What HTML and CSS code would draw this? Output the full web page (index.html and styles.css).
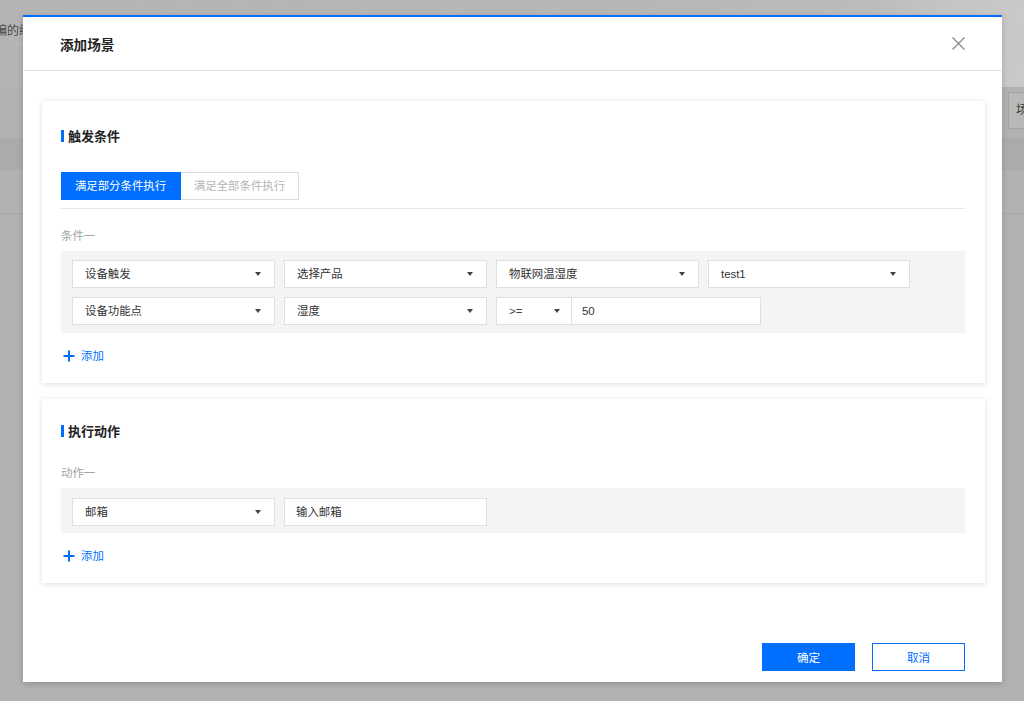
FILE: index.html
```html
<!DOCTYPE html>
<html lang="zh-CN">
<head>
<meta charset="utf-8">
<title>添加场景</title>
<link rel="stylesheet" href="styles.css">
</head>
<body>
<div class="page">
  <div class="page-top"><span class="page-crumb">编的编辑</span></div>
  <div class="page-toolbar"><span class="page-btn">场景</span></div>
  <div class="page-thead"></div>
  <div class="page-row"></div>
</div>

<div class="modal">
  <div class="modal-head">
    <span class="modal-title">添加场景</span>
    <svg class="modal-close" width="13" height="13" viewBox="0 0 13 13"><path d="M0.5 0.5L12.5 12.5M12.5 0.5L0.5 12.5" stroke="#8a8a8a" stroke-width="1.3" fill="none"/></svg>
  </div>

  <div class="modal-body">
    <section class="card card-trigger">
      <h3 class="sec-title"><i class="sec-bar"></i>触发条件</h3>
      <div class="tabs">
        <span class="tab tab-on">满足部分条件执行</span>
        <span class="tab">满足全部条件执行</span>
      </div>
      <div class="item-label">条件一</div>
      <div class="item-box">
        <div class="row">
          <div class="sel w203"><span>设备触发</span><i class="caret"></i></div>
          <div class="sel w203"><span>选择产品</span><i class="caret"></i></div>
          <div class="sel w203"><span>物联网温湿度</span><i class="caret"></i></div>
          <div class="sel w202"><span>test1</span><i class="caret"></i></div>
        </div>
        <div class="row">
          <div class="sel w203"><span>设备功能点</span><i class="caret"></i></div>
          <div class="sel w203"><span>湿度</span><i class="caret"></i></div>
          <div class="combo">
            <div class="sel op"><span>&gt;=</span><i class="caret"></i></div>
            <div class="inp val">50</div>
          </div>
        </div>
      </div>
      <div class="add"><svg width="12" height="12" viewBox="0 0 12 12"><path d="M6 0.5V11.5M0.5 6H11.5" stroke="#006eff" stroke-width="2" fill="none"/></svg><span>添加</span></div>
    </section>

    <section class="card card-action">
      <h3 class="sec-title"><i class="sec-bar"></i>执行动作</h3>
      <div class="item-label label-action">动作一</div>
      <div class="item-box box-action">
        <div class="row">
          <div class="sel w203"><span>邮箱</span><i class="caret"></i></div>
          <div class="inp w203">输入邮箱</div>
        </div>
      </div>
      <div class="add"><svg width="12" height="12" viewBox="0 0 12 12"><path d="M6 0.5V11.5M0.5 6H11.5" stroke="#006eff" stroke-width="2" fill="none"/></svg><span>添加</span></div>
    </section>
  </div>

  <div class="modal-foot">
    <button class="btn btn-primary">确定</button>
    <button class="btn btn-default">取消</button>
  </div>
</div>
</body>
</html>
```

FILE: styles.css
```css
* { box-sizing: border-box; }
html, body { margin: 0; padding: 0; }
body {
  width: 1024px;
  height: 701px;
  overflow: hidden;
  position: relative;
  background: #b2b2b2;
  font-family: "Liberation Sans", "Noto Sans CJK SC", sans-serif;
  font-size: 11.4px;
  color: #333;
}

/* background page (dimmed) */
.page-top {
  height: 87px;
  padding-top: 21px;
  background:
    repeating-linear-gradient(30deg, transparent 0, transparent 46px, rgba(255,255,255,0.07) 47px, transparent 48px),
    repeating-linear-gradient(150deg, transparent 0, transparent 46px, rgba(255,255,255,0.07) 47px, transparent 48px),
    linear-gradient(90deg, #b4b4b4 0%, #b6b6b6 60%, #bbbbbb 84%, #c4c4c4 92%, #c9c9c9 100%);
}
.page-crumb {
  display: block;
  text-indent: -5px;
  color: #4a4a4a;
  font-size: 12px;
  line-height: 20px;
  white-space: nowrap;
}
.page-toolbar {
  height: 51px;
  display: flex;
  justify-content: flex-end;
  padding-top: 5px;
}
.page-btn {
  width: 16px;
  height: 37px;
  border: 1px solid #a3a3a3;
  border-right: none;
  background: #b8b8b8;
  padding-left: 7px;
  line-height: 35px;
  font-size: 12px;
  color: #3a3a3a;
  overflow: hidden;
  white-space: nowrap;
}
.page-thead { height: 32px; background: #ababab; }
.page-row { height: 44px; border-bottom: 1px solid #a7a7a7; }

/* modal */
.modal {
  position: absolute;
  left: 23px;
  top: 15px;
  width: 979px;
  height: 667px;
  background: #fff;
  border-top: 2px solid #006eff;
  box-shadow: 0 2px 6px rgba(0, 0, 0, 0.18);
  display: flex;
  flex-direction: column;
}
.modal-head {
  height: 54px;
  flex: none;
  border-bottom: 1px solid #dfe3ea;
  display: flex;
  align-items: center;
  justify-content: space-between;
  padding: 0 37px 0 37px;
}
.modal-title {
  font-size: 13.6px;
  font-weight: bold;
  color: #222;
  font-family: "Noto Sans CJK SC", sans-serif;
}
.modal-close { display: block; }

.modal-body {
  padding: 30px 17px 0 19px;
  display: flex;
  flex-direction: column;
  gap: 16px;
}

.card {
  background: #fff;
  box-shadow: 0 1px 6px rgba(0, 0, 0, 0.13);
  padding: 24px 20px 17px 19px;
}
.card-action { padding-top: 21px; }

.sec-title {
  margin: 0;
  font-size: 13px;
  line-height: 22px;
  font-weight: bold;
  color: #222;
  display: flex;
  align-items: center;
  font-family: "Noto Sans CJK SC", sans-serif;
}
.sec-bar {
  width: 3px;
  height: 12px;
  background: #006eff;
  margin-right: 4px;
}

.tabs {
  margin-top: 25px;
  padding-bottom: 8px;
  border-bottom: 1px solid #e6e6e6;
  display: flex;
}
.tab {
  height: 28px;
  line-height: 26px;
  width: 118px;
  border: 1px solid #dcdcdc;
  border-left: none;
  text-align: center;
  color: #b5b5b5;
}
.tab-on {
  width: 120px;
  background: #006eff;
  border-color: #006eff;
  color: #fff;
}

.item-label {
  margin-top: 17px;
  line-height: 20px;
  color: #a3a3a3;
}
.label-action { margin-top: 21px; }

.item-box {
  margin-top: 5px;
  background: #f4f4f4;
  padding: 9px 11px 8px;
  display: flex;
  flex-direction: column;
  gap: 9px;
}
.box-action { padding-top: 10px; padding-bottom: 7px; }

.row { display: flex; gap: 9px; }

.sel, .inp {
  height: 28px;
  background: #fff;
  border: 1px solid #dcdfe4;
  color: #333;
  line-height: 26px;
  white-space: nowrap;
}
.sel {
  display: flex;
  align-items: center;
  justify-content: space-between;
  padding: 0 13px 0 12px;
}
.inp { padding: 0 11px; }
.w203 { width: 203px; }
.w202 { width: 202px; }

.caret {
  width: 0;
  height: 0;
  border-left: 3.5px solid transparent;
  border-right: 3.5px solid transparent;
  border-top: 4px solid #444;
}

.combo { display: flex; }
.op { width: 76px; padding: 0 11px 0 12px; color: #444; }
.val { width: 189px; border-left: none; padding-left: 10px; }

.add {
  margin-top: 13px;
  display: flex;
  align-items: center;
  gap: 6px;
  padding-left: 2px;
  line-height: 20px;
  color: #006eff;
}
.add svg { display: block; }

.modal-foot {
  margin-top: auto;
  display: flex;
  justify-content: flex-end;
  gap: 17px;
  padding: 0 37px 11px 0;
}
.btn {
  width: 93px;
  height: 28px;
  font-family: "Noto Sans CJK SC", sans-serif;
  font-size: 11.6px;
  border: 1px solid #006eff;
  padding: 0;
  cursor: pointer;
}
.btn-primary { background: #006eff; color: #fff; }
.btn-default { background: #fff; color: #006eff; }
```
